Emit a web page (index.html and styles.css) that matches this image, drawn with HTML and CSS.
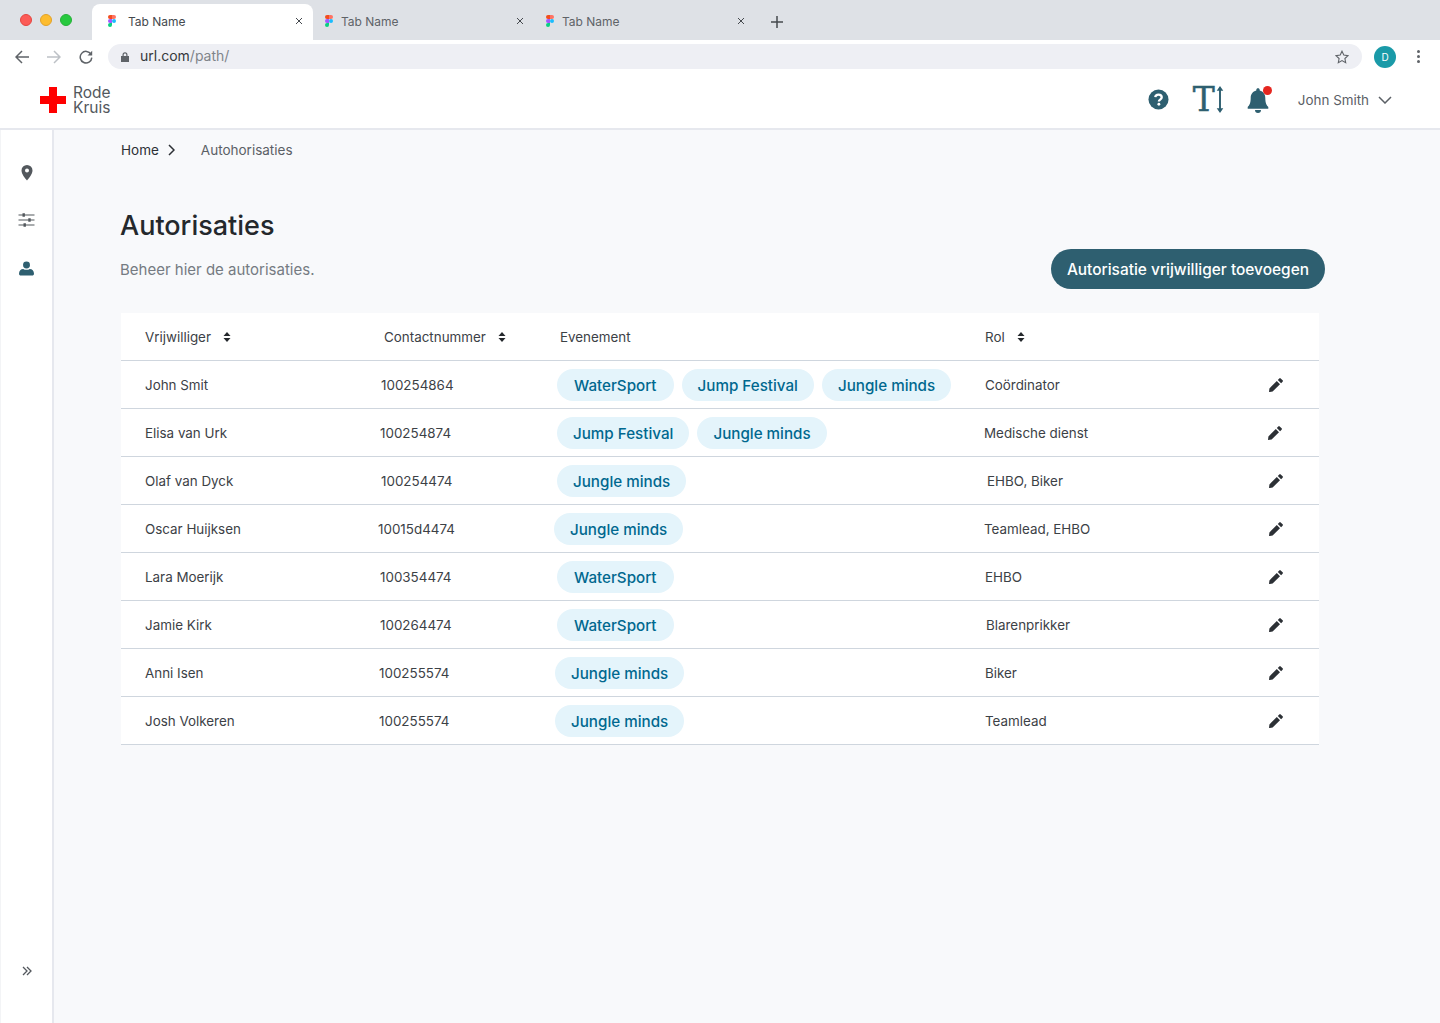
FILE: index.html
```html
<!DOCTYPE html>
<html lang="en">
<head>
    <meta charset="UTF-8">
    <title>Autorisaties</title>
    <link rel="stylesheet" href="styles.css">
</head>
<body>

    <!-- Browser chrome -->
    <div class="tabbar">
        <div class="lights">
            <span class="light light-red"></span>
            <span class="light light-yellow"></span>
            <span class="light light-green"></span>
        </div>
        <div class="tab tab-active">
            <svg class="figma" viewBox="0 0 8 12"><path fill="#f24e1e" d="M0 2a2 2 0 0 1 2-2h2v4H2a2 2 0 0 1-2-2z"/><path fill="#ff7262" d="M4 0h2a2 2 0 0 1 0 4H4z"/><path fill="#a259ff" d="M0 6a2 2 0 0 1 2-2h2v4H2a2 2 0 0 1-2-2z"/><circle fill="#1abcfe" cx="6" cy="6" r="2"/><path fill="#0acf83" d="M0 10a2 2 0 0 1 2-2h2v2a2 2 0 0 1-4 0z"/></svg>
            <span class="tab-name">Tab Name</span>
            <svg class="tab-x" viewBox="0 0 8 8"><path d="M1 1l6 6M7 1l-6 6"/></svg>
        </div>
        <div class="tab">
            <svg class="figma" viewBox="0 0 8 12"><path fill="#f24e1e" d="M0 2a2 2 0 0 1 2-2h2v4H2a2 2 0 0 1-2-2z"/><path fill="#ff7262" d="M4 0h2a2 2 0 0 1 0 4H4z"/><path fill="#a259ff" d="M0 6a2 2 0 0 1 2-2h2v4H2a2 2 0 0 1-2-2z"/><circle fill="#1abcfe" cx="6" cy="6" r="2"/><path fill="#0acf83" d="M0 10a2 2 0 0 1 2-2h2v2a2 2 0 0 1-4 0z"/></svg>
            <span class="tab-name">Tab Name</span>
            <svg class="tab-x" viewBox="0 0 8 8"><path d="M1 1l6 6M7 1l-6 6"/></svg>
        </div>
        <div class="tab">
            <svg class="figma" viewBox="0 0 8 12"><path fill="#f24e1e" d="M0 2a2 2 0 0 1 2-2h2v4H2a2 2 0 0 1-2-2z"/><path fill="#ff7262" d="M4 0h2a2 2 0 0 1 0 4H4z"/><path fill="#a259ff" d="M0 6a2 2 0 0 1 2-2h2v4H2a2 2 0 0 1-2-2z"/><circle fill="#1abcfe" cx="6" cy="6" r="2"/><path fill="#0acf83" d="M0 10a2 2 0 0 1 2-2h2v2a2 2 0 0 1-4 0z"/></svg>
            <span class="tab-name">Tab Name</span>
            <svg class="tab-x" viewBox="0 0 8 8"><path d="M1 1l6 6M7 1l-6 6"/></svg>
        </div>
        <svg class="tab-plus" viewBox="0 0 12 12"><path d="M6 0v12M0 6h12"/></svg>
    </div>

    <div class="toolbar">
        <svg class="nav-icon" viewBox="0 0 14 14"><path d="M14 7H1.5M7 1L1 7l6 6"/></svg>
        <svg class="nav-icon nav-off" viewBox="0 0 14 14"><path d="M0 7h12.5M7 1l6 6-6 6"/></svg>
        <svg class="nav-icon" viewBox="0 0 14 14"><path d="M12 4.2A5.8 5.8 0 1 0 12.8 7.6"/><path class="solid" d="M13.2 0.8v4.7H8.5z"/></svg>
        <div class="urlbar">
            <svg class="lock" viewBox="0 0 8 10"><path d="M1.5 4V2.8a2.5 2.5 0 0 1 5 0V4H8v6H0V4zM2.7 4h2.600V2.800a1.300 1.300 0 0 0-2.600 0z"/></svg>
            <span class="url">url.com<span class="url-path">/path/</span></span>
            <svg class="star" viewBox="0 0 14 14"><path d="M7 1.2l1.800 3.900 4.200.5-3.100 2.900.8 4.200L7 10.600l-3.700 2.100.8-4.200L1 5.600l4.200-.5z"/></svg>
        </div>
        <div class="avatar">D</div>
        <div class="kebab"><span></span><span></span><span></span></div>
    </div>

    <!-- App header -->
    <header class="app-header">
        <div class="logo">
            <svg class="logo-cross" viewBox="0 0 26 26"><path d="M9 0h8v9h9v8h-9v9H9v-9H0V9h9z"/></svg>
            <div class="logo-text"><div>Rode</div><div>Kruis</div></div>
        </div>
        <div class="header-right">
            <svg class="icon-help" viewBox="0 0 22 22"><circle cx="11" cy="11" r="10.500"/><path class="help-mark" d="M7.600 8.600C7.800 6.800 9.200 5.800 11 5.800c2 0 3.400 1.100 3.400 2.900 0 2.300-3 2.400-3 4.300"/><circle class="help-dot" cx="11.400" cy="16" r="1.500"/></svg>
            <div class="text-size">
                <span class="text-size-t">T</span>
                <svg class="text-size-arrow" viewBox="0 0 8 28"><path d="M4 2v24" /><path class="solid" d="M4 0l3.400 5H.6zM4 28l3.400-5H.6z"/></svg>
            </div>
            <div class="bell-wrap">
                <svg class="icon-bell" viewBox="0 0 24 26"><path d="M12 1.200c1 0 1.700.7 1.700 1.700v.7c3.600.8 5.600 3.800 5.600 7.400 0 5.400 1.400 7.400 3 9v1.800H1.700V20c1.600-1.600 3-3.600 3-9 0-3.600 2-6.600 5.600-7.400v-.7c0-1 .7-1.700 1.700-1.700zM9 23h6a3 3 0 0 1-6 0z"/></svg>
                <span class="bell-dot"></span>
            </div>
            <div class="user">
                <span>John Smith</span>
                <svg class="user-chevron" viewBox="0 0 14 8"><path d="M1 1l6 6 6-6"/></svg>
            </div>
        </div>
    </header>

    <div class="app-body">
        <!-- Sidebar -->
        <aside class="sidebar">
            <div class="side-top">
                <svg class="side-pin" viewBox="0 0 12 16"><path fill-rule="evenodd" d="M6 0a5.500 5.500 0 0 1 5.500 5.500C11.500 9 8 13 6 15.500 4 13 .5 9 .5 5.500A5.500 5.500 0 0 1 6 0zm0 3.500a2 2 0 1 0 0 4 2 2 0 0 0 0-4z"/></svg>
                <svg class="side-sliders" viewBox="0 0 16 14"><path d="M0 2h16M0 7h16M0 12h16"/><path class="solid" d="M4 .2h2.400v3.600H4zM9.800 5.200h2.400v3.600H9.800zM5 10.200h2.400v3.600H5z"/></svg>
                <svg class="side-user" viewBox="0 0 16 15"><circle cx="8" cy="3.700" r="3.700"/><path d="M0 13c0-3.300 2-5 4.500-5 1 .6 2.200.9 3.500.9s2.500-.3 3.500-.9C14 8 16 9.700 16 13c0 1.200-.8 2-2 2H2c-1.200 0-2-.8-2-2z"/></svg>
            </div>
            <svg class="side-expand" viewBox="0 0 10 10"><path d="M1 1l4 4-4 4M5 1l4 4-4 4"/></svg>
        </aside>

        <main class="content">
            <nav class="breadcrumb">
                <span class="crumb-home">Home</span>
                <svg class="crumb-chevron" viewBox="0 0 7 12"><path d="M1 1l5 5-5 5"/></svg>
                <span class="crumb-current">Autohorisaties</span>
            </nav>

            <h1 class="page-title">Autorisaties</h1>

            <div class="page-intro">
                <p class="page-sub">Beheer hier de autorisaties.</p>
                <button class="add-button">Autorisatie vrijwilliger toevoegen</button>
            </div>

            <div class="table">
                <div class="row head-row">
                    <div class="cell col-name">Vrijwilliger <svg class="sort" viewBox="0 0 8 10"><path d="M4 0l3.500 4H.5zM4 10l3.500-4H.5z"/></svg></div>
                    <div class="cell col-phone head-phone">Contactnummer <svg class="sort" viewBox="0 0 8 10"><path d="M4 0l3.500 4H.5zM4 10l3.500-4H.5z"/></svg></div>
                    <div class="cell col-event head-event">Evenement</div>
                    <div class="cell col-role">Rol <svg class="sort" viewBox="0 0 8 10"><path d="M4 0l3.500 4H.5zM4 10l3.500-4H.5z"/></svg></div>
                </div>

                <div class="row">
                    <div class="cell col-name">John Smit</div>
                    <div class="cell col-phone">100254864</div>
                    <div class="cell col-event"><span class="pill pill-water">WaterSport</span><span class="pill">Jump Festival</span><span class="pill">Jungle minds</span></div>
                    <div class="cell col-role">Coördinator</div>
                    <svg class="edit" viewBox="0 0 14 14"><path d="M10.300.4a1 1 0 0 1 1.400 0l1.900 1.900a1 1 0 0 1 0 1.400l-1.500 1.500-3.300-3.300zM7.800 3l3.200 3.200-7.400 7.400-3.600.4.400-3.600z"/></svg>
                </div>
                <div class="row">
                    <div class="cell col-name">Elisa van Urk</div>
                    <div class="cell col-phone shift-1">100254874</div>
                    <div class="cell col-event"><span class="pill">Jump Festival</span><span class="pill">Jungle minds</span></div>
                    <div class="cell col-role shift-1">Medische dienst</div>
                    <svg class="edit shift-1" viewBox="0 0 14 14"><path d="M10.300.4a1 1 0 0 1 1.400 0l1.900 1.900a1 1 0 0 1 0 1.400l-1.500 1.500-3.300-3.300zM7.800 3l3.200 3.200-7.400 7.400-3.600.4.400-3.600z"/></svg>
                </div>
                <div class="row">
                    <div class="cell col-name">Olaf van Dyck</div>
                    <div class="cell col-phone">100254474</div>
                    <div class="cell col-event"><span class="pill">Jungle minds</span></div>
                    <div class="cell col-role nudge-2">EHBO, Biker</div>
                    <svg class="edit" viewBox="0 0 14 14"><path d="M10.300.4a1 1 0 0 1 1.400 0l1.900 1.900a1 1 0 0 1 0 1.400l-1.500 1.500-3.300-3.300zM7.800 3l3.200 3.200-7.400 7.400-3.600.4.400-3.600z"/></svg>
                </div>
                <div class="row">
                    <div class="cell col-name">Oscar Huijksen</div>
                    <div class="cell col-phone shift-3">10015d4474</div>
                    <div class="cell col-event shift-3"><span class="pill">Jungle minds</span></div>
                    <div class="cell col-role shift-1">Teamlead, EHBO</div>
                    <svg class="edit" viewBox="0 0 14 14"><path d="M10.300.4a1 1 0 0 1 1.400 0l1.900 1.900a1 1 0 0 1 0 1.400l-1.500 1.500-3.300-3.300zM7.800 3l3.200 3.200-7.400 7.400-3.600.4.400-3.600z"/></svg>
                </div>
                <div class="row">
                    <div class="cell col-name">Lara Moerijk</div>
                    <div class="cell col-phone shift-1">100354474</div>
                    <div class="cell col-event"><span class="pill pill-water">WaterSport</span></div>
                    <div class="cell col-role">EHBO</div>
                    <svg class="edit" viewBox="0 0 14 14"><path d="M10.300.4a1 1 0 0 1 1.400 0l1.900 1.900a1 1 0 0 1 0 1.400l-1.500 1.500-3.300-3.300zM7.800 3l3.200 3.200-7.400 7.400-3.600.4.400-3.600z"/></svg>
                </div>
                <div class="row">
                    <div class="cell col-name">Jamie Kirk</div>
                    <div class="cell col-phone shift-1">100264474</div>
                    <div class="cell col-event"><span class="pill pill-water">WaterSport</span></div>
                    <div class="cell col-role nudge-1">Blarenprikker</div>
                    <svg class="edit" viewBox="0 0 14 14"><path d="M10.300.4a1 1 0 0 1 1.400 0l1.900 1.900a1 1 0 0 1 0 1.400l-1.500 1.500-3.300-3.300zM7.800 3l3.200 3.200-7.400 7.400-3.600.4.400-3.600z"/></svg>
                </div>
                <div class="row">
                    <div class="cell col-name">Anni Isen</div>
                    <div class="cell col-phone shift-2">100255574</div>
                    <div class="cell col-event shift-2"><span class="pill">Jungle minds</span></div>
                    <div class="cell col-role">Biker</div>
                    <svg class="edit" viewBox="0 0 14 14"><path d="M10.300.4a1 1 0 0 1 1.400 0l1.900 1.900a1 1 0 0 1 0 1.400l-1.500 1.500-3.300-3.300zM7.800 3l3.200 3.200-7.400 7.400-3.600.4.400-3.600z"/></svg>
                </div>
                <div class="row">
                    <div class="cell col-name">Josh Volkeren</div>
                    <div class="cell col-phone shift-2">100255574</div>
                    <div class="cell col-event shift-2"><span class="pill">Jungle minds</span></div>
                    <div class="cell col-role">Teamlead</div>
                    <svg class="edit" viewBox="0 0 14 14"><path d="M10.300.4a1 1 0 0 1 1.400 0l1.900 1.900a1 1 0 0 1 0 1.400l-1.500 1.500-3.300-3.300zM7.800 3l3.200 3.200-7.400 7.400-3.600.4.400-3.600z"/></svg>
                </div>
            </div>
        </main>
    </div>

</body>
</html>
```

FILE: styles.css
```css
/* Reset and Body Styling */
* {
    margin: 0;
    padding: 0;
    box-sizing: border-box;
}
html, body {
    height: 100%;
    overflow: hidden;
}
body {
    font-family: 'Inter', 'Noto Sans', sans-serif;
    background-color: #f8f9fb;
    color: #333a40;
    display: flex;
    flex-direction: column;
}

/* Browser Tabs */
.tabbar {
    height: 40px;
    flex: none;
    background-color: #dee1e6;
    display: flex;
    align-items: flex-end;
}
.lights {
    width: 92px;
    height: 40px;
    flex: none;
    display: flex;
    gap: 8px;
    padding: 14px 0 0 20px;
}
.light {
    width: 12px;
    height: 12px;
    border-radius: 50%;
}
.light-red { background-color: #fc5b57; border: 1px solid #e5453f; }
.light-yellow { background-color: #fdbc2e; border: 1px solid #e2a228; }
.light-green { background-color: #27c93f; border: 1px solid #25b138; }
.tab {
    width: 221px;
    height: 36px;
    flex: none;
    display: flex;
    align-items: center;
    padding: 0 10px 2px 12px;
    font-size: 12px;
    color: #5f6368;
}
.tab-active {
    background-color: #ffffff;
    border-radius: 8px 8px 0 0;
    color: #45494e;
    padding-left: 16px;
}
.figma {
    width: 8px;
    height: 12px;
    flex: none;
}
.tab-name {
    flex: 1;
    margin-left: 8px;
}
.tab-active .tab-name {
    margin-left: 12px;
}
.tab-x {
    width: 8px;
    height: 8px;
    fill: none;
    stroke: #45494e;
    stroke-width: 1;
}
.tab-plus {
    width: 12px;
    height: 12px;
    margin: 0 0 12px 16px;
    fill: none;
    stroke: #45494e;
    stroke-width: 1.500;
}

/* Browser Toolbar */
.toolbar {
    height: 33px;
    flex: none;
    background-color: #ffffff;
    display: flex;
    align-items: center;
    padding: 0 0 0 15px;
}
.nav-icon {
    width: 14px;
    height: 14px;
    flex: none;
    margin-right: 18px;
    fill: none;
    stroke: #5f6368;
    stroke-width: 1.500;
}
.nav-icon .solid {
    fill: #5f6368;
    stroke: none;
}
.nav-off {
    stroke: #bdc1c6;
}
.urlbar {
    width: 1254px;
    height: 25px;
    margin-left: -3px;
    background-color: #eeeff4;
    border-radius: 13px;
    display: flex;
    align-items: center;
    padding: 0 13px;
}
.lock {
    width: 8px;
    height: 10px;
    fill: #5f6368;
    margin-right: 11px;
}
.url {
    flex: 1;
    font-size: 14px;
    line-height: 14px;
    padding-bottom: 2px;
    color: #35383c;
}
.url-path {
    color: #80848a;
}
.star {
    width: 14px;
    height: 14px;
    fill: none;
    stroke: #5f6368;
    stroke-width: 1.100;
}
.avatar {
    width: 22px;
    height: 22px;
    margin-left: 12px;
    border-radius: 50%;
    background-color: #1a9aa8;
    color: #ffffff;
    font-size: 10px;
    line-height: 22px;
    text-align: center;
}
.kebab {
    margin-left: 21px;
    display: flex;
    flex-direction: column;
    gap: 2px;
}
.kebab span {
    width: 3px;
    height: 3px;
    border-radius: 50%;
    background-color: #5f6368;
}

/* App Header */
.app-header {
    height: 57px;
    flex: none;
    background-color: #ffffff;
    border-bottom: 2px solid #e6e8ee;
    display: flex;
    align-items: center;
    justify-content: space-between;
    padding: 0 48px 2px 40px;
}
.logo {
    display: flex;
    align-items: center;
    gap: 7px;
}
.logo-cross {
    width: 26px;
    height: 26px;
    fill: #ff0000;
}
.logo-text {
    font-size: 15.500px;
    line-height: 15px;
    color: #53585d;
}
.header-right {
    display: flex;
    align-items: center;
}
.icon-help {
    width: 21px;
    height: 21px;
    fill: #2e5f70;
    margin-right: 24px;
}
.help-mark {
    fill: none;
    stroke: #ffffff;
    stroke-width: 2.400;
}
.help-dot {
    fill: #ffffff;
}
.text-size {
    display: flex;
    align-items: center;
    gap: 1px;
    width: 32px;
    margin-right: 21px;
}
.text-size-t {
    font-family: 'DejaVu Serif', 'Liberation Serif', serif;
    font-size: 33px;
    line-height: 30px;
    color: #2e5f70;
    -webkit-text-stroke: 0.5px #2e5f70;
}
.text-size-arrow {
    width: 8px;
    height: 27px;
    fill: none;
    stroke: #2e5f70;
    stroke-width: 2;
}
.text-size-arrow .solid {
    fill: #2e5f70;
    stroke: none;
}
.bell-wrap {
    position: relative;
    width: 24px;
    height: 26px;
    margin-right: 28px;
}
.icon-bell {
    width: 24px;
    height: 26px;
    fill: #2e5f70;
}
.bell-dot {
    position: absolute;
    top: -1px;
    right: -2px;
    width: 9px;
    height: 9px;
    border-radius: 50%;
    background-color: #e5261f;
}
.user {
    display: flex;
    align-items: center;
    gap: 9px;
    font-size: 13.400px;
    color: #5b6066;
}
.user-chevron {
    width: 14px;
    height: 8px;
    fill: none;
    stroke: #5b6066;
    stroke-width: 1.500;
}

/* Layout */
.app-body {
    flex: 1;
    display: flex;
    min-height: 0;
}
.sidebar {
    width: 54px;
    flex: none;
    background-color: #ffffff;
    border-right: 2px solid #e6e8ee;
    border-left: 1px solid #f3f4f6;
    display: flex;
    flex-direction: column;
    align-items: center;
    justify-content: space-between;
    padding: 35px 0 47px;
}
.side-top {
    display: flex;
    flex-direction: column;
    align-items: center;
}
.side-pin {
    width: 12px;
    height: 16px;
    fill: #53585d;
    margin-bottom: 32px;
}
.side-sliders {
    width: 17px;
    height: 14px;
    fill: none;
    stroke: #53585d;
    stroke-width: 1.200;
    margin-bottom: 34px;
}
.side-sliders .solid {
    fill: #53585d;
    stroke: none;
}
.side-user {
    width: 15px;
    height: 15px;
    fill: #2e5f70;
}
.side-expand {
    width: 10px;
    height: 10px;
    fill: none;
    stroke: #53585d;
    stroke-width: 1.300;
}

/* Content */
.content {
    flex: 1;
    padding: 11px 115px 0 66px;
    min-width: 0;
}
.breadcrumb {
    display: flex;
    align-items: center;
    height: 18px;
    font-size: 13.500px;
    padding-left: 1px;
}
.crumb-home {
    color: #2c3035;
}
.crumb-chevron {
    width: 7px;
    height: 12px;
    margin: 0 26px 0 9px;
    fill: none;
    stroke: #2c3035;
    stroke-width: 1.500;
}
.crumb-current {
    color: #5b6066;
}
.page-title {
    margin-top: 49px;
    font-size: 27px;
    line-height: 36px;
    font-weight: 500;
    color: #24282c;
}
.page-intro {
    display: flex;
    align-items: center;
    justify-content: space-between;
    margin-top: 5px;
}
.page-sub {
    font-size: 15px;
    color: #757b82;
}
.add-button {
    font-family: inherit;
    height: 40px;
    padding: 0 16px;
    background-color: #2e5f70;
    color: #ffffff;
    border: none;
    border-radius: 20px;
    font-size: 15.450px;
    font-weight: 500;
}

/* Table */
.table {
    width: 1198px;
    margin: 24px 0 0 1px;
    background-color: #ffffff;
}
.row {
    height: 48px;
    display: flex;
    align-items: center;
    padding-left: 24px;
    border-bottom: 1px solid #cfd6de;
    font-size: 13.400px;
    color: #3c4146;
}
.cell {
    flex: none;
    display: flex;
    align-items: center;
}
.col-name { width: 236px; }
.col-phone { width: 176px; }
.col-event { width: 428px; gap: 8px; }
.col-role { width: 284px; }
.head-phone { margin-left: 3px; width: 173px; }
.head-event { margin-left: 3px; width: 425px; }
.sort {
    width: 8px;
    height: 10px;
    fill: #24282c;
    margin-left: 12px;
}
.pill {
    height: 32px;
    padding: 1px 16px 0;
    border-radius: 16px;
    background-color: #e4f4fb;
    color: #00688f;
    font-size: 15.200px;
    font-weight: 500;
    line-height: 32px;
}
.pill-water {
    padding: 1px 17px 0;
}
.edit {
    width: 14px;
    height: 14px;
    flex: none;
    fill: #2c3035;
}

/* Small per-row offsets seen in the design */
.shift-1 { transform: translateX(-1px); }
.shift-2 { transform: translateX(-2px); }
.shift-3 { transform: translateX(-3px); }
.nudge-1 { transform: translateX(1px); }
.nudge-2 { transform: translateX(2px); }
```
